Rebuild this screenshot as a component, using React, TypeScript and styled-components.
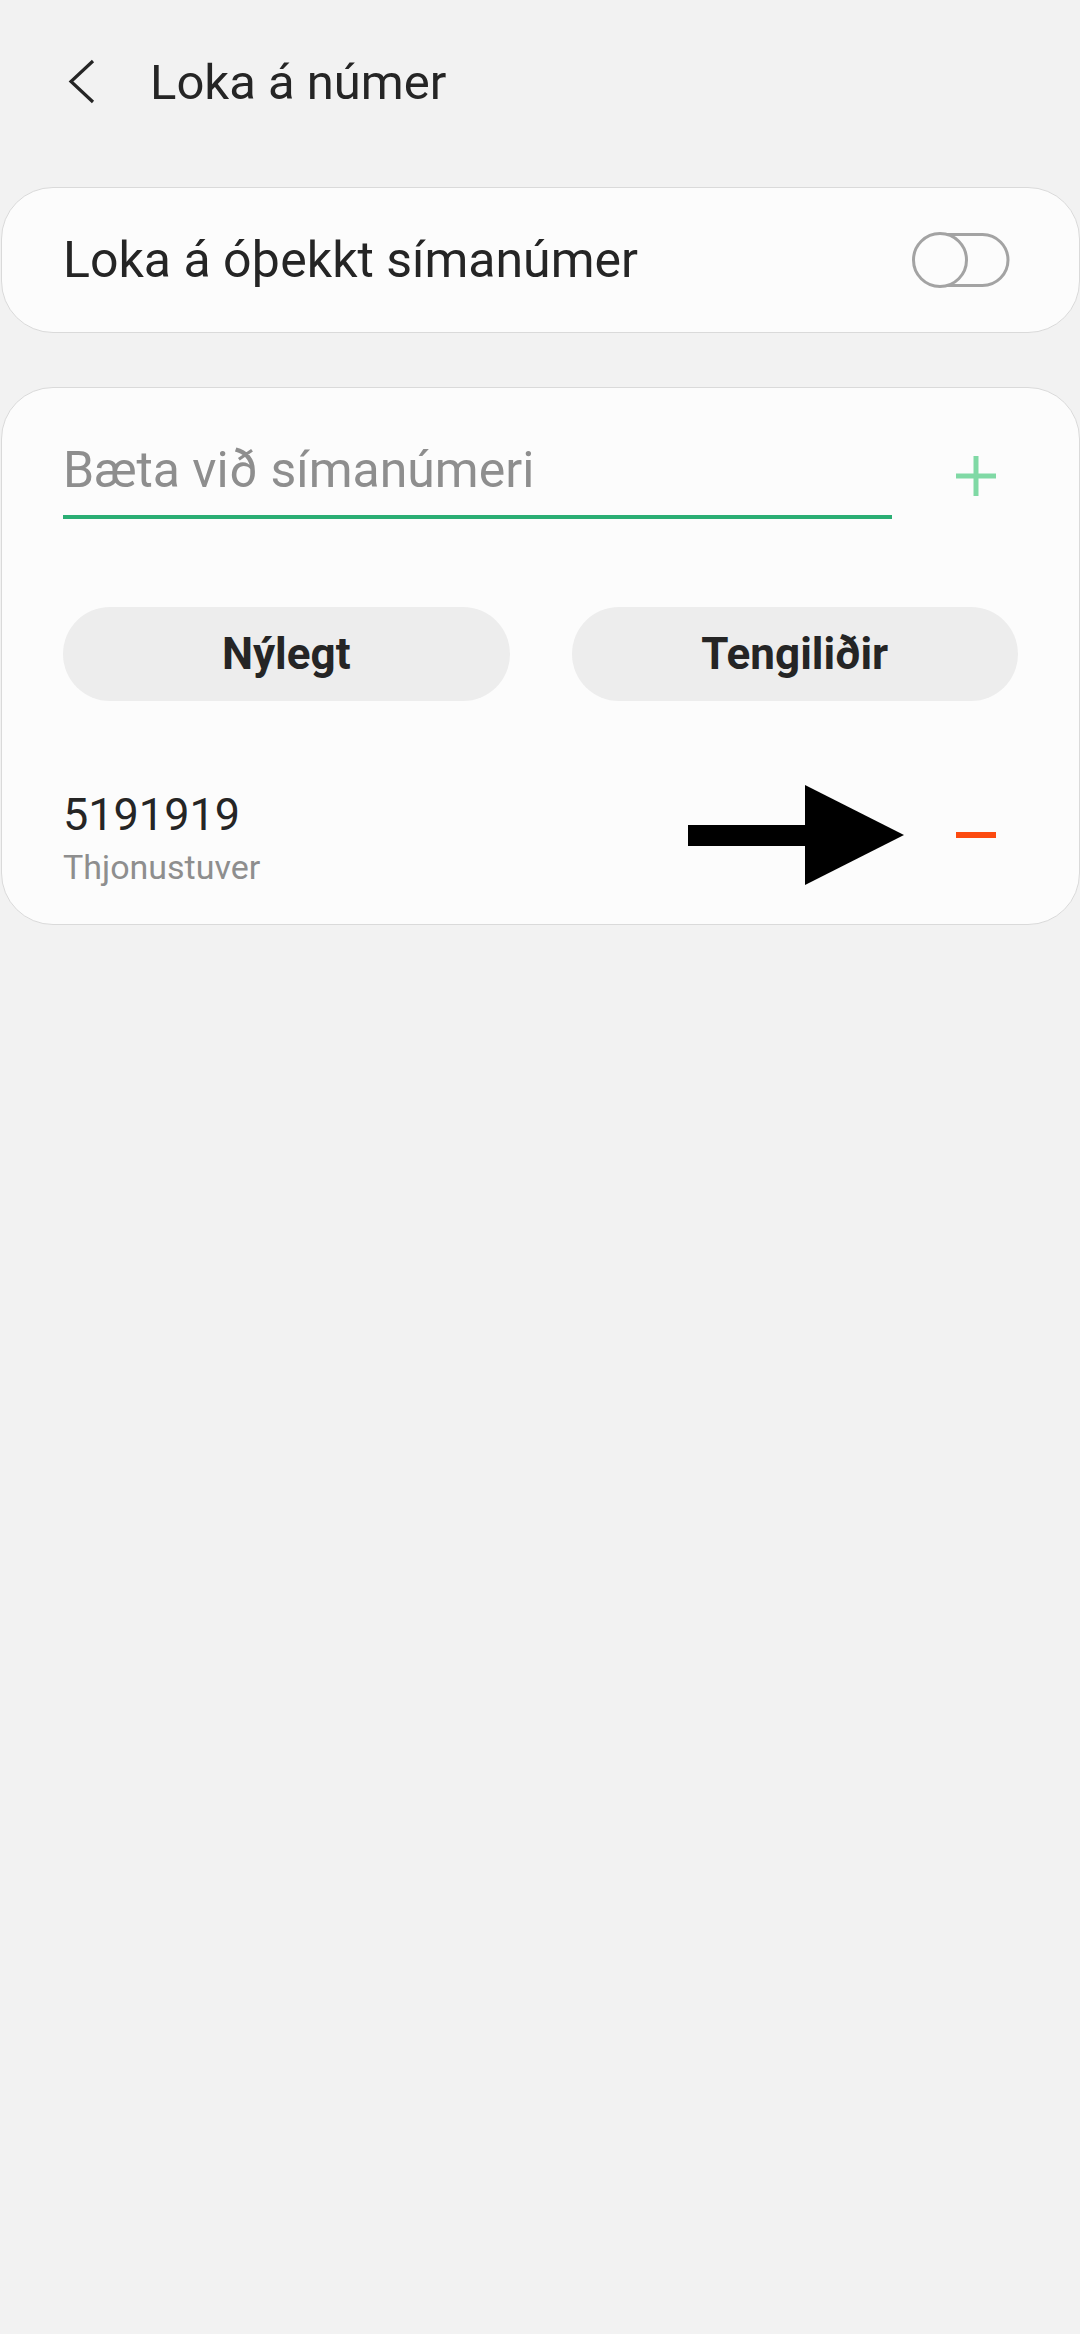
import React from "react";
import styled, { createGlobalStyle } from "styled-components";

const GlobalStyle = createGlobalStyle`
  html, body {
    margin: 0;
    padding: 0;
    background: #f2f2f2;
    font-family: Roboto, "Noto Sans", "Liberation Sans", sans-serif;
    color: #252525;
  }
`;

const Page = styled.div`
  min-height: 2334px;
  background: #f2f2f2;
`;

const Header = styled.header`
  height: 164px;
  display: flex;
  align-items: center;
  padding-left: 67px;
`;

const BackButton = styled.button`
  border: 0;
  background: none;
  padding: 0;
  width: 30px;
  height: 46px;
  display: flex;
  align-items: center;
  justify-content: center;
  cursor: pointer;
`;

const Title = styled.h1`
  margin: 0 0 0 53px;
  font-size: 49px;
  font-weight: 400;
  color: #252525;
`;

const Card = styled.section`
  margin: 0 0 0 1px;
  background: #fcfcfc;
  border: 1px solid #dadada;
  border-radius: 52px;
`;

const SwitchCard = styled(Card)`
  margin-top: 23px;
  height: 144px;
  display: flex;
  align-items: center;
  justify-content: space-between;
  padding: 0 69px 0 61px;
`;

const SwitchLabel = styled.span`
  font-size: 50px;
  color: #252525;
`;

const BlockCard = styled(Card)`
  margin-top: 54px;
  padding: 52px 61px 37px;
`;

const InputRow = styled.div`
  display: flex;
  align-items: center;
`;

const Field = styled.input`
  flex: 1;
  min-width: 0;
  border: 0;
  border-bottom: 4px solid #2aae74;
  background: transparent;
  padding: 0 0 15px;
  margin: 0;
  height: 79px;
  box-sizing: border-box;
  font-family: inherit;
  font-size: 50px;
  line-height: 60px;
  color: #252525;
  outline: none;
  &::placeholder {
    color: #8e8e8e;
  }
`;

const IconButton = styled.button<{ $top?: number; $bottom?: number }>`
  border: 0;
  background: none;
  padding: 0;
  margin: ${(p) => p.$top ?? 0}px 21px ${(p) => p.$bottom ?? 0}px 63px;
  width: 42px;
  height: 42px;
  flex-shrink: 0;
  display: flex;
  align-items: center;
  justify-content: center;
  cursor: pointer;
`;

const Tabs = styled.div`
  margin-top: 88px;
  display: grid;
  grid-template-columns: 1fr 1fr;
  gap: 62px;
`;

const Pill = styled.button`
  height: 94px;
  border: 0;
  border-radius: 47px;
  background: #ededed;
  font-family: inherit;
  font-size: 44px;
  font-weight: 700;
  color: #252525;
  cursor: pointer;
`;

const Entry = styled.div`
  margin-top: 88px;
  display: flex;
  align-items: flex-start;
`;

const EntryText = styled.div`
  flex: 1;
  display: flex;
  flex-direction: column;
  gap: 6px;
`;

const Number = styled.span`
  font-size: 45px;
  line-height: 52px;
  color: #252525;
`;

const Name = styled.span`
  font-size: 34px;
  line-height: 40px;
  color: #8e8e8e;
`;

const Pointer = styled.svg`
  display: block;
  flex-shrink: 0;
  margin: -4px -12px -6px 0;
`;

const Toggle = () => (
  <svg width="100" height="60" viewBox="0 0 100 60">
    <rect x="10" y="4.5" width="88" height="51" rx="25.5" fill="none" stroke="#a3a3a3" strokeWidth="3" />
    <circle cx="30" cy="30" r="26.5" fill="#fcfcfc" stroke="#a3a3a3" strokeWidth="3" />
  </svg>
);

export default function App() {
  return (
    <Page>
      <GlobalStyle />
      <Header>
        <BackButton aria-label="Til baka">
          <svg width="30" height="46" viewBox="0 0 30 46">
            <polyline points="26,2 4,22.5 26,43" fill="none" stroke="#252525" strokeWidth="3.2" />
          </svg>
        </BackButton>
        <Title>Loka á númer</Title>
      </Header>

      <SwitchCard>
        <SwitchLabel>Loka á óþekkt símanúmer</SwitchLabel>
        <Toggle />
      </SwitchCard>

      <BlockCard>
        <InputRow>
          <Field placeholder="Bæta við símanúmeri" />
          <IconButton aria-label="Bæta við" $bottom={7}>
            <svg width="42" height="42" viewBox="0 0 42 42">
              <path d="M21 1v40M1 21h40" stroke="#80d9a5" strokeWidth="5" />
            </svg>
          </IconButton>
        </InputRow>

        <Tabs>
          <Pill>Nýlegt</Pill>
          <Pill>Tengiliðir</Pill>
        </Tabs>

        <Entry>
          <EntryText>
            <Number>5191919</Number>
            <Name>Thjonustuver</Name>
          </EntryText>
          <Pointer width="216" height="100" viewBox="0 0 216 100">
            <rect x="0" y="40" width="118" height="21" fill="#000" />
            <polygon points="117,0 216,50 117,100" fill="#000" />
          </Pointer>
          <IconButton aria-label="Fjarlægja" $top={25}>
            <svg width="42" height="42" viewBox="0 0 42 42">
              <path d="M1 21h40" stroke="#fc4a10" strokeWidth="6" />
            </svg>
          </IconButton>
        </Entry>
      </BlockCard>
    </Page>
  );
}
